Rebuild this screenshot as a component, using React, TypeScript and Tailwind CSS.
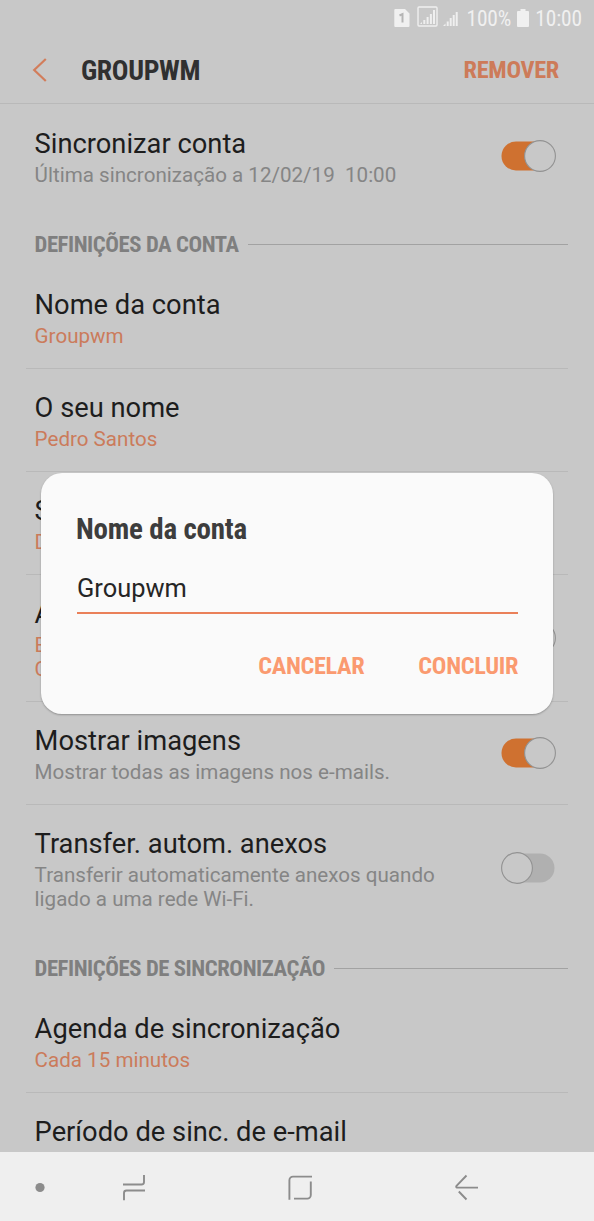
import type { ReactNode } from 'react';

const condensed = "font-['Roboto_Condensed',Roboto,sans-serif] font-bold [font-stretch:75%]";

function Toggle({ on }: { on: boolean }) {
  return (
    <svg width="56" height="34" viewBox="0 0 56 34" className="shrink-0" role="switch" aria-checked={on}>
      <rect x="1.5" y="2.5" width="53" height="29" rx="14.5" fill={on ? '#cf7130' : '#b0b0b0'} />
      <circle cx={on ? 40 : 17} cy="17" r="15.4" fill="#c8c8c8" stroke="#929292" strokeWidth="1.1" />
    </svg>
  );
}

function Row({
  title,
  lines,
  accent,
  divider,
  toggle,
}: {
  title: string;
  lines: string[];
  accent?: boolean;
  divider?: boolean;
  toggle?: boolean;
}) {
  return (
    <div className={`ml-[26px] mr-[26px] flex shrink-0 items-center pl-[8.6px] pr-[12px] ${divider ? 'border-b border-[#b9b9b9]' : ''}`}>
      <div className="min-w-0 flex-1 pt-[21px] pb-5">
        <div className="h-9 whitespace-nowrap text-[27.3px] leading-9 text-[#1d1d1d]">{title}</div>
        <div className={`mt-px whitespace-pre text-[20.6px] leading-6 ${accent ? 'text-[#cb7b5b]' : 'text-[#858585]'}`}>
          {lines.map((l) => (
            <div key={l}>{l}</div>
          ))}
        </div>
      </div>
      {toggle !== undefined && <Toggle on={toggle} />}
    </div>
  );
}

function Section({ children }: { children: ReactNode }) {
  return (
    <div className="flex h-[59px] shrink-0 items-center gap-[9px] pt-[16px] pl-[34.5px] pr-[26px]">
      <h2 className={`${condensed} whitespace-nowrap pt-[2px] text-[22.7px] tracking-[-0.43px] text-[#7f7f7f]`}>{children}</h2>
      <div className="h-px flex-1 bg-[#a2a2a2]" />
    </div>
  );
}

function Signal({ framed }: { framed?: boolean }) {
  return framed ? (
    <svg width="21" height="21" viewBox="0 0 21 21" fill="none">
      <rect x="1" y="1" width="19" height="19" rx="1" stroke="#efefef" strokeWidth="1.4" />
      <path d="M3 18l2-2v2zM6.3 14h2v4h-2zM9.6 11h2v7h-2zM12.9 8h2v10h-2zM16 4h2v14h-2z" fill="#efefef" />
    </svg>
  ) : (
    <svg width="15" height="15" viewBox="0 0 15 15" fill="#efefef">
      <path d="M0 15l2.500-2.500V15zM3.700 10.500h2V15h-2zM6.700 7h2v8h-2zM9.700 4h2v11h-2zM12.700 1h2v14h-2z" />
    </svg>
  );
}

function StatusBar() {
  return (
    <div className="flex h-9 shrink-0 items-center justify-end pr-[12px] font-['Roboto_Condensed',Roboto,sans-serif] text-[21.4px] text-[#f0f0f0] [font-stretch:75%]">
      <svg width="16" height="18" viewBox="0 0 16 18" className="mr-[7px] -mt-px">
        <path d="M1 0h10l4.500 4.500V17a1 1 0 0 1-1 1H1.300a1 1 0 0 1-1-1V1a1 1 0 0 1 1-1z" fill="#f0f0f0" />
        <path d="M5.500 6.500L8.500 5v8.500" fill="none" stroke="#b5b5b5" strokeWidth="2" />
      </svg>
      <span className="-mt-[3px]">
        <Signal framed />
      </span>
      <span className="ml-[5px] mr-[8px]">
        <Signal />
      </span>
      <span className="pt-px leading-9 tracking-[-0.1px]">100%</span>
      <svg width="12" height="18" viewBox="0 0 12 18" fill="#f0f0f0" className="ml-[6px] mr-[6px] -mt-px">
        <path d="M3.500 0h5v2H11a1 1 0 0 1 1 1v14a1 1 0 0 1-1 1H1a1 1 0 0 1-1-1V3a1 1 0 0 1 1-1h2.500z" />
      </svg>
      <span className="pt-px leading-9 tracking-[-0.1px]">10:00</span>
    </div>
  );
}

function NavBar() {
  return (
    <nav className="flex h-[69px] shrink-0 items-start bg-[#efefef]">
      <svg width="594" height="69" viewBox="0 0 594 69" fill="none" stroke="#8c8c8c" strokeWidth="1.9">
        <circle cx="40" cy="35.500" r="4.600" fill="#8c8c8c" stroke="none" />
        <path d="M123 32.500h18.500a2.500 2.500 0 0 0 2.500-2.500v-7M145 38.500h-18.500a2.500 2.500 0 0 0-2.500 2.500v7.300" />
        <path d="M312 24.600h-19a3.600 3.600 0 0 0-3.600 3.600v19.500M310.800 29.500v13.500a3.600 3.600 0 0 1-3.600 3.600h-13.200" />
        <path d="M478 35.600h-21q-1.300-.6-.5-1.700l10-10.400M458.800 39.500l7.700 8" strokeLinejoin="round" />
      </svg>
    </nav>
  );
}

function Dialog() {
  return (
    <div
      role="dialog"
      className="absolute left-[41px] top-[473px] flex h-[241px] w-[512px] flex-col rounded-[21px] bg-[#fafafa] pl-9 pr-[35px] shadow-[0_1px_2px_rgba(0,0,0,0.28)]"
    >
      <h3 className={`${condensed} -ml-px mt-[38px] text-[29px] leading-9 tracking-[-0.2px] text-[#3d3d3d]`}>Nome da conta</h3>
      <div className="mt-[21px] h-[46px] border-b-2 border-[#ea8059] text-[25.4px] leading-10 text-[#262626]">Groupwm</div>
      <div className={`${condensed} mt-[34px] flex justify-end gap-[54px] text-[24.3px] leading-9 tracking-[-0.35px] text-[#fa9a70]`}>
        <button>CANCELAR</button>
        <button>CONCLUIR</button>
      </div>
    </div>
  );
}

export default function App() {
  return (
    <div className="relative flex h-[1221px] w-[594px] flex-col overflow-hidden bg-[#c8c8c8] font-[Roboto,sans-serif]">
      <StatusBar />
      <header className="flex h-[68px] shrink-0 items-center border-b border-[#b9b9b9] pl-8 pr-[35px]">
        <svg width="16" height="24" viewBox="0 0 16 24" fill="none" stroke="#d27d5b" strokeWidth="2.200">
          <path d="M13.800 1L2.200 12l11.600 11" />
        </svg>
        <h1 className={`${condensed} ml-[33px] flex-1 pt-[3px] text-[27.7px] tracking-[-0.35px] text-[#303030]`}>GROUPWM</h1>
        <button className={`${condensed} pt-px text-[24.3px] tracking-[-0.3px] text-[#cd7b59]`}>REMOVER</button>
      </header>
      <main className="flex min-h-0 flex-1 flex-col overflow-hidden pt-px">
        <Row title="Sincronizar conta" lines={['Última sincronização a 12/02/19  10:00']} toggle={true} />
        <Section>DEFINIÇÕES DA CONTA</Section>
        <Row title="Nome da conta" lines={['Groupwm']} accent divider />
        <Row title="O seu nome" lines={['Pedro Santos']} accent divider />
        <Row title="S" lines={['D']} accent divider />
        <Row title="A" lines={['E', 'C']} accent divider toggle={true} />
        <Row title="Mostrar imagens" lines={['Mostrar todas as imagens nos e-mails.']} divider toggle={true} />
        <Row
          title="Transfer. autom. anexos"
          lines={['Transferir automaticamente anexos quando', 'ligado a uma rede Wi-Fi.']}
          toggle={false}
        />
        <Section>DEFINIÇÕES DE SINCRONIZAÇÃO</Section>
        <Row title="Agenda de sincronização" lines={['Cada 15 minutos']} accent divider />
        <Row title="Período de sinc. de e-mail" lines={[]} />
      </main>
      <NavBar />
      <Dialog />
    </div>
  );
}
